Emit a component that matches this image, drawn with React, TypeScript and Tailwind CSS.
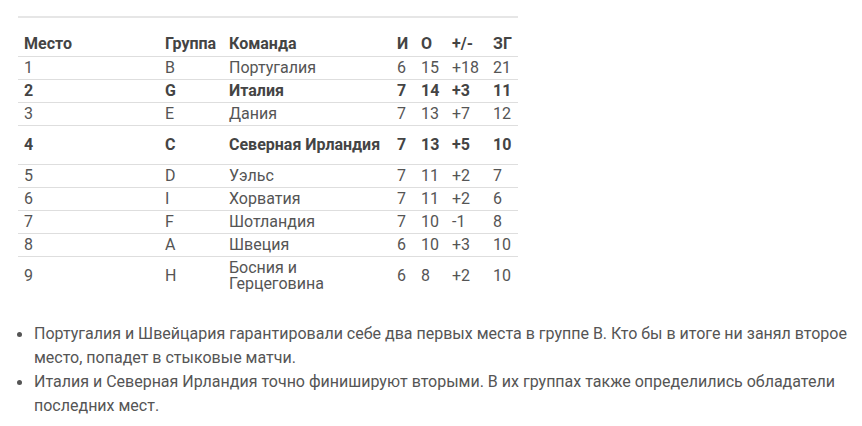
const rows = [
  { place: '1', group: 'B', team: 'Португалия', g: '6', p: '15', d: '+18', s: '21' },
  { place: '2', group: 'G', team: 'Италия', g: '7', p: '14', d: '+3', s: '11', bold: true },
  { place: '3', group: 'E', team: 'Дания', g: '7', p: '13', d: '+7', s: '12' },
  { place: '4', group: 'C', team: 'Северная Ирландия', g: '7', p: '13', d: '+5', s: '10', bold: true, tall: true },
  { place: '5', group: 'D', team: 'Уэльс', g: '7', p: '11', d: '+2', s: '7' },
  { place: '6', group: 'I', team: 'Хорватия', g: '7', p: '11', d: '+2', s: '6' },
  { place: '7', group: 'F', team: 'Шотландия', g: '7', p: '10', d: '-1', s: '8' },
  { place: '8', group: 'A', team: 'Швеция', g: '6', p: '10', d: '+3', s: '10' },
];

const notes = [
  'Португалия и Швейцария гарантировали себе два первых места в группе B. Кто бы в итоге ни занял второе место, попадет в стыковые матчи.',
  'Италия и Северная Ирландия точно финишируют вторыми. В их группах также определились обладатели последних мест.',
];

function Cell({ children, className = '' }: { children: React.ReactNode; className?: string }) {
  return <td className={`px-[6px] py-0 align-middle ${className}`}>{children}</td>;
}

export default function App() {
  return (
    <div className="w-[862px] h-[426px] bg-white text-[#555] text-[16px] font-['Roboto',sans-serif]">
      <div className="pt-4 pl-[18px]">
        <div className="w-[500px] h-[2px] bg-[#e6e6e6]" />
        <table className="mt-[14px] w-[500px] table-fixed border-collapse leading-4">
          <colgroup>
            <col className="w-[141px]" />
            <col className="w-[64px]" />
            <col className="w-[168px]" />
            <col className="w-[24px]" />
            <col className="w-[31px]" />
            <col className="w-[41px]" />
            <col className="w-[31px]" />
          </colgroup>
          <thead>
            <tr className="h-[24px] border-b border-[#dedede] font-bold text-[#444] text-left">
              <th className="px-[6px]">Место</th>
              <th className="px-[6px]">Группа</th>
              <th className="px-[6px]">Команда</th>
              <th className="px-[6px]">И</th>
              <th className="px-[6px]">О</th>
              <th className="px-[6px]">+/-</th>
              <th className="px-[6px]">ЗГ</th>
            </tr>
          </thead>
          <tbody>
            {rows.map((r) => (
              <tr
                key={r.place}
                className={`border-b border-[#dedede] ${r.tall ? 'h-[39px]' : 'h-[23px]'} ${r.bold ? 'font-bold text-[#444]' : ''}`}
              >
                <Cell>{r.place}</Cell>
                <Cell>{r.group}</Cell>
                <Cell className="whitespace-nowrap">{r.team}</Cell>
                <Cell>{r.g}</Cell>
                <Cell>{r.p}</Cell>
                <Cell>{r.d}</Cell>
                <Cell>{r.s}</Cell>
              </tr>
            ))}
            <tr className="h-[40px]">
              <Cell>9</Cell>
              <Cell>H</Cell>
              <Cell>
                Босния и<br />Герцеговина
              </Cell>
              <Cell>6</Cell>
              <Cell>8</Cell>
              <Cell>+2</Cell>
              <Cell>10</Cell>
            </tr>
          </tbody>
        </table>
      </div>
      <ul className="mt-[26px] pl-[17px] w-[856px] flex flex-col gap-[1px]">
        {notes.map((n) => (
          <li key={n} className="flex leading-[23.5px]">
            <span className="w-[17px] shrink-0 flex items-start pt-[10px]">
              <span className="w-[5px] h-[5px] rounded-full bg-[#555]" />
            </span>
            <span>{n}</span>
          </li>
        ))}
      </ul>
    </div>
  );
}
